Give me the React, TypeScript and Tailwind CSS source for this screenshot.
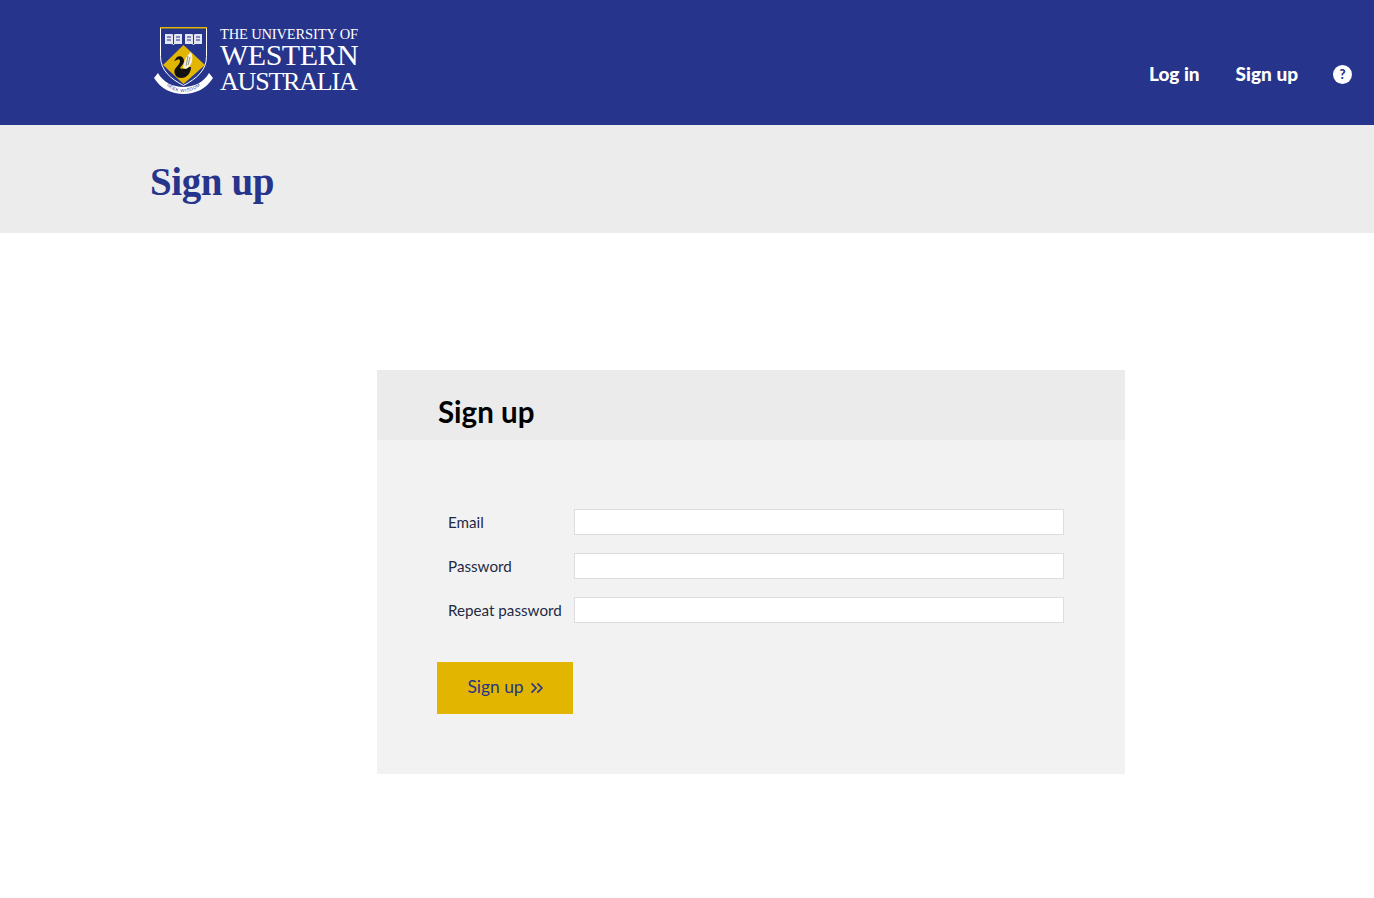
import { ChevronsRight } from "lucide-react";

function Crest() {
	return (
		<svg width="62" height="72" viewBox="0 0 62 72" className="shrink-0">
			<path d="M7.500 1.500h46v29c0 14-10 22-23 29C18 53 7.500 44.500 7.500 30.500z" fill="#27348b" stroke="#fff" strokeWidth="1" />
			<rect x="7" y="1" width="47" height="1.500" fill="#e2b600" />
			<path d="M12 8h7l1.500 1 1.500-1h7v10h-7l-1.500 1-1.500-1h-7zM32 8h7l1.500 1 1.500-1h7v10h-7l-1.500 1-1.500-1h-7z" fill="#e3e5f1" />
			<path d="M20.500 9v9M40.500 9v9M14 11h4M14 14h4M23 11h4M23 14h4M34 11h4M34 14h4M43 11h4M43 14h4" stroke="#27348b" strokeWidth="1" />
			<path d="M30.500 19 52 39 30.500 58 10 39z" fill="#e2b600" />
			<path d="M21 35l3-4c3-2 7 0 7 4 0 3-3 5-4 7 3 2 6 0 9-1h2c0 6-4 11-10 11-5 0-8-5-6-9 2-3 5-5 5-8 0-2-2-2-3-1z" fill="#111" />
			<path d="M30 42c1-8 4-13 8-16 3 6 1 14-5 17z" fill="#f4f1dc" />
			<path d="M35 30l-2 10M37 31l-2 8" stroke="#555" strokeWidth=".6" />
			<path d="M5 47c5 9 15 14 25.500 14S51 56 56 47l4 5C53 63 42 68 30.500 68S8 63 1 52z" fill="#fff" />
			<path id="ribbon" d="M9 54c6 8 13 12 21.500 12S46 62 52 54" fill="none" />
			<text fontSize="4.500" fill="#27348b" fontFamily="Liberation Sans, sans-serif" letterSpacing=".5">
				<textPath href="#ribbon" startOffset="50%" textAnchor="middle">SEEK WISDOM</textPath>
			</text>
		</svg>
	);
}

export default function App() {
	return (
		<div className="min-h-[898px] bg-white font-['Lato',sans-serif]">
			<header className="h-[125px] bg-[#27348b] flex justify-between pl-[153px] pr-[22px]">
				<div className="flex items-start pt-[26px] gap-[5px]">
					<Crest />
					<div className="text-white font-['Liberation_Serif',serif] w-[140px]">
						<div className="text-[14.500px] leading-[16px] whitespace-nowrap tracking-[-0.15px]">THE UNIVERSITY OF</div>
						<div className="text-[30px] leading-[25px] whitespace-nowrap tracking-[-0.5px]">WESTERN</div>
						<div className="text-[26px] leading-[29px] whitespace-nowrap tracking-[-1.200px]">AUSTRALIA</div>
					</div>
				</div>
				<nav className="flex items-center gap-9 pt-[24px] text-white font-black text-[19px]">
					<a href="#">Log in</a>
					<a href="#">Sign up</a>
					<span className="ml-[-1px] w-[19px] h-[19px] rounded-full bg-white text-[#27348b] text-[13px] leading-[19px] text-center">?</span>
				</nav>
			</header>
			<div className="h-[108px] bg-[#ececec] pl-[150px] pt-[32px]">
				<h1 className="font-['Liberation_Serif',serif] font-bold text-[#27348b] text-[39px] leading-[50px] tracking-[-0.400px]">Sign up</h1>
			</div>
			<main className="ml-[377px] mt-[137px] w-[748px] h-[404px] bg-[#f2f2f2]">
				<div className="h-[70px] bg-[#ebebeb] pl-[61px] pt-[24px]">
					<h2 className="font-bold text-black text-[29.500px] leading-[36px]">Sign up</h2>
				</div>
				<form className="pl-[60px] pt-[69px]">
					<div className="flex flex-col gap-[18px]">
						{["Email", "Password", "Repeat password"].map((label) => (
							<div key={label} className="flex items-center">
								<label className="w-[137px] pl-[11px] text-[15.200px] text-[#1f2a44] whitespace-nowrap">{label}</label>
								<input className="w-[490px] h-[26px] bg-white border border-[#dcdde3]" />
							</div>
						))}
					</div>
					<button type="button" className="mt-[39px] w-[136px] h-[52px] pl-[4px] bg-[#e2b600] text-[#27348b] text-[17.400px] flex items-center justify-center gap-[3px]">
						<span className="relative top-[-1px]">Sign up</span>
						<ChevronsRight size={20} strokeWidth={2} />
					</button>
				</form>
			</main>
		</div>
	);
}
